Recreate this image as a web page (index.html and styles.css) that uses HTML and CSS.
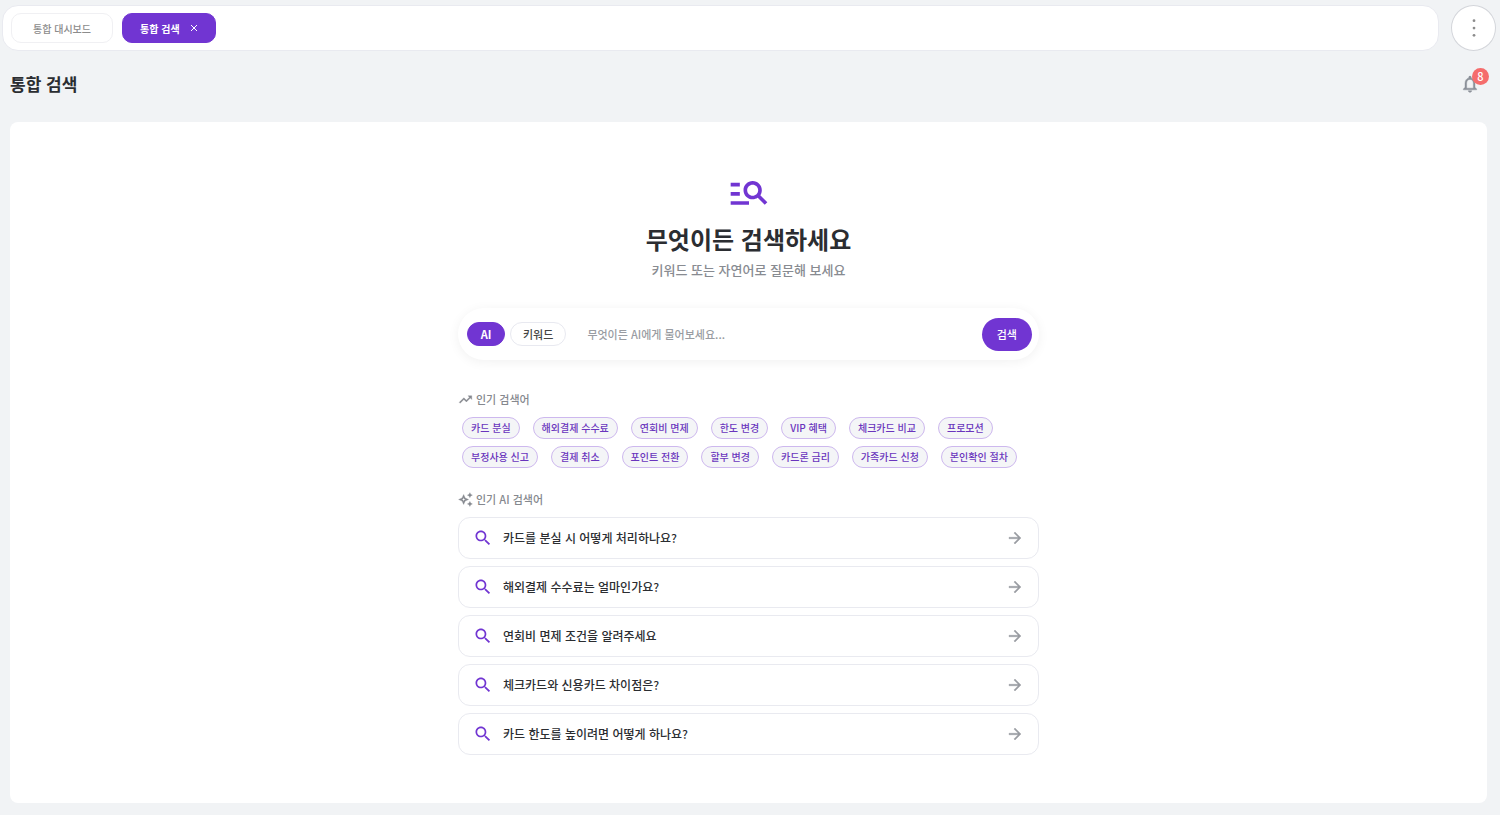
FILE: index.html
```html
<!DOCTYPE html>
<html lang="ko">
<head>
    <meta charset="UTF-8">
    <meta name="viewport" content="width=device-width, initial-scale=1.0">
    <title>통합 검색</title>
    <link rel="stylesheet" href="styles.css">
</head>
<body>
    <!-- Shared icons -->
    <svg class="sprite" aria-hidden="true">
        <symbol id="icon-search" viewBox="0 0 24 24">
            <path d="M15.5 14h-.79l-.28-.27C15.41 12.59 16 11.11 16 9.5 16 5.91 13.09 3 9.5 3S3 5.91 3 9.5 5.91 16 9.5 16c1.61 0 3.09-.59 4.23-1.57l.27.28v.79l5 4.99L20.49 19l-4.99-5zm-6 0C7.01 14 5 11.99 5 9.5S7.01 5 9.5 5 14 7.01 14 9.5 11.99 14 9.5 14z"/>
        </symbol>
        <symbol id="icon-arrow" viewBox="0 0 24 24">
            <path d="M12 4l-1.41 1.41L16.17 11H4v2h12.17l-5.58 5.59L12 20l8-8z"/>
        </symbol>
    </svg>

    <header class="topbar">
        <nav class="tabs">
            <button class="tab" type="button">통합 대시보드</button>
            <button class="tab active" type="button">통합 검색
                <svg class="tab-close" viewBox="0 0 8 8"><path d="M1 1l6 6M7 1L1 7"/></svg>
            </button>
        </nav>
        <button class="more-btn" type="button" aria-label="더보기">
            <svg viewBox="0 0 24 24"><circle cx="12" cy="4" r="1.5"/><circle cx="12" cy="12" r="1.5"/><circle cx="12" cy="20" r="1.5"/></svg>
        </button>
    </header>

    <div class="page-header">
        <h1>통합 검색</h1>
        <button class="bell-btn" type="button" aria-label="알림">
            <svg viewBox="0 0 24 24"><path d="M12 22c1.1 0 2-.9 2-2h-4c0 1.1.9 2 2 2zm6-6v-5c0-3.07-1.63-5.64-4.5-6.32V4c0-.83-.67-1.5-1.5-1.5s-1.5.67-1.5 1.5v.68C7.64 5.36 6 7.92 6 11v5l-2 2v1h16v-1l-2-2zm-2 1H8v-6c0-2.48 1.51-4.5 4-4.5s4 2.02 4 4.5v6z"/></svg>
            <span class="badge">8</span>
        </button>
    </div>

    <main class="panel">
        <div class="search-area">
            <div class="hero">
                <svg class="hero-icon" viewBox="0 0 24 24"><path d="M7 9H2V7h5v2zm0 3H2v2h5v-2zm13.59 7l-3.83-3.83c-.8.52-1.74.83-2.76.83-2.76 0-5-2.24-5-5s2.24-5 5-5 5 2.24 5 5c0 1.02-.31 1.96-.83 2.75L22 17.59 20.59 19zM17 11c0-1.65-1.35-3-3-3s-3 1.35-3 3 1.35 3 3 3 3-1.35 3-3zM2 19h10v-2H2v2z"/></svg>
                <h2>무엇이든 검색하세요</h2>
                <p>키워드 또는 자연어로 질문해 보세요</p>
            </div>

            <form class="search-box">
                <button class="mode active" type="button">AI</button>
                <button class="mode" type="button">키워드</button>
                <input class="search-input" type="text" aria-label="검색어" placeholder="무엇이든 AI에게 물어보세요...">
                <button class="search-btn" type="button">검색</button>
            </form>

            <section class="popular">
                <h3>
                    <svg viewBox="0 0 24 24"><path d="M16 6l2.29 2.29-4.88 4.88-4-4L2 16.59 3.41 18l6-6 4 4 6.3-6.29L22 12V6z"/></svg>
                    인기 검색어
                </h3>
                <div class="chips">
                    <button class="chip" type="button">카드 분실</button>
                    <button class="chip" type="button">해외결제 수수료</button>
                    <button class="chip" type="button">연회비 면제</button>
                    <button class="chip" type="button">한도 변경</button>
                    <button class="chip" type="button">VIP 혜택</button>
                    <button class="chip" type="button">체크카드 비교</button>
                    <button class="chip" type="button">프로모션</button>
                    <button class="chip" type="button">부정사용 신고</button>
                    <button class="chip" type="button">결제 취소</button>
                    <button class="chip" type="button">포인트 전환</button>
                    <button class="chip" type="button">할부 변경</button>
                    <button class="chip" type="button">카드론 금리</button>
                    <button class="chip" type="button">가족카드 신청</button>
                    <button class="chip" type="button">본인확인 절차</button>
                </div>
            </section>

            <section class="questions">
                <h3>
                    <svg viewBox="0 0 24 24"><path d="M19 9l1.25-2.75L23 5l-2.75-1.25L19 1l-1.25 2.75L15 5l2.75 1.25zM19 15l-1.25 2.75L15 19l2.75 1.25L19 23l1.25-2.75L23 19l-2.75-1.25zM11.5 9.5L9 4 6.5 9.5 1 12l5.5 2.5L9 20l2.5-5.5L17 12zm-1.51 3.49L9 15.17l-.99-2.18L5.83 12l2.18-.99L9 8.83l.99 2.18 2.18.99z"/></svg>
                    인기 AI 검색어
                </h3>
                <button class="question" type="button">
                    <svg class="q-icon"><use href="#icon-search"/></svg>
                    <span>카드를 분실 시 어떻게 처리하나요?</span>
                    <svg class="q-arrow"><use href="#icon-arrow"/></svg>
                </button>
                <button class="question" type="button">
                    <svg class="q-icon"><use href="#icon-search"/></svg>
                    <span>해외결제 수수료는 얼마인가요?</span>
                    <svg class="q-arrow"><use href="#icon-arrow"/></svg>
                </button>
                <button class="question" type="button">
                    <svg class="q-icon"><use href="#icon-search"/></svg>
                    <span>연회비 면제 조건을 알려주세요</span>
                    <svg class="q-arrow"><use href="#icon-arrow"/></svg>
                </button>
                <button class="question" type="button">
                    <svg class="q-icon"><use href="#icon-search"/></svg>
                    <span>체크카드와 신용카드 차이점은?</span>
                    <svg class="q-arrow"><use href="#icon-arrow"/></svg>
                </button>
                <button class="question" type="button">
                    <svg class="q-icon"><use href="#icon-search"/></svg>
                    <span>카드 한도를 높이려면 어떻게 하나요?</span>
                    <svg class="q-arrow"><use href="#icon-arrow"/></svg>
                </button>
            </section>
        </div>
    </main>
</body>
</html>
```
FILE: styles.css
```css
* {
    margin: 0;
    padding: 0;
    box-sizing: border-box;
    font-family: 'Noto Sans CJK KR', sans-serif;
}

body {
    display: flex;
    flex-direction: column;
    min-height: 100vh;
    background: #f1f3f5;
    color: #2b2d31;
}

button {
    border: none;
    background: none;
    cursor: pointer;
}

svg {
    display: block;
    flex: none;
    fill: currentColor;
}

.sprite {
    position: absolute;
    width: 0;
    height: 0;
}

/* Top bar */
.topbar {
    display: flex;
    gap: 12px;
    padding: 5px 4px 0 2px;
}

.tabs {
    flex: 1;
    display: flex;
    align-items: center;
    gap: 9px;
    height: 46px;
    padding: 0 8px;
    background: white;
    border: 1px solid #e9eaf0;
    border-radius: 16px;
}

.tab {
    display: flex;
    align-items: center;
    gap: 10px;
    height: 30px;
    padding: 0 21px;
    border: 1px solid #f0f0f3;
    border-radius: 10px;
    color: #8c8c8c;
    font-size: 10px;
    font-weight: 500;
}

.tab.active {
    padding: 0 17px;
    background: #7135d2;
    border-color: #7135d2;
    color: white;
    font-weight: 700;
}

.tab-close {
    width: 8px;
    height: 8px;
    stroke: currentColor;
    stroke-width: 1;
}

.more-btn {
    display: flex;
    align-items: center;
    justify-content: center;
    width: 45px;
    height: 46px;
    background: white;
    border: 1px solid #d3d5da;
    border-radius: 50%;
    color: #8c8c8c;
}

.more-btn svg {
    width: 22px;
    height: 22px;
}

/* Page title */
.page-header {
    display: flex;
    align-items: center;
    justify-content: space-between;
    height: 71px;
    padding: 0 20px 6px 10px;
}

.page-header h1 {
    font-size: 17px;
    font-weight: 700;
}

.bell-btn {
    position: relative;
    color: #8b9098;
}

.bell-btn svg {
    width: 20px;
    height: 20px;
    stroke: currentColor;
    stroke-width: 0.5;
}

.badge {
    position: absolute;
    top: -6px;
    right: -9px;
    width: 17px;
    height: 17px;
    border-radius: 50%;
    background: #f56c6c;
    color: white;
    font-size: 11px;
    font-weight: 500;
    line-height: 17px;
    text-align: center;
}

/* Search panel */
.panel {
    flex: 1;
    margin: 0 13px 12px 10px;
    padding: 48px 20px;
    background: white;
    border-radius: 8px;
}

.search-area {
    max-width: 581px;
    margin: 0 auto;
}

.hero {
    text-align: center;
}

.hero-icon {
    width: 44px;
    height: 44px;
    margin: 0 auto 8px;
    color: #7135d2;
}

.hero h2 {
    font-size: 24px;
    font-weight: 700;
    line-height: 34px;
}

.hero p {
    margin-top: 2px;
    color: #888b91;
    font-size: 13px;
    font-weight: 500;
    line-height: 24px;
}

.search-box {
    display: flex;
    align-items: center;
    gap: 5px;
    height: 52px;
    margin: 26px 0 30px;
    padding: 0 7px 0 9px;
    background: white;
    border-radius: 26px;
    box-shadow: 0 2px 12px rgba(0,0,0,0.06);
}

.mode {
    min-width: 38px;
    height: 24px;
    padding: 0 12px;
    border: 1px solid #e8e9f0;
    border-radius: 12px;
    color: #444;
    font-size: 11px;
    font-weight: 500;
}

.mode.active {
    background: #7135d2;
    border-color: #7135d2;
    color: white;
    font-weight: 700;
}

.search-input {
    flex: 1;
    min-width: 0;
    padding: 0 16px;
    border: none;
    outline: none;
    font-size: 11px;
    font-weight: 500;
}

.search-input::placeholder {
    color: #999ca2;
}

.search-btn {
    height: 33px;
    padding: 0 15px;
    border-radius: 17px;
    background: #7135d2;
    color: white;
    font-size: 11px;
    font-weight: 500;
}

h3 {
    display: flex;
    align-items: center;
    gap: 3px;
    margin-bottom: 9px;
    color: #85888e;
    font-size: 11px;
    font-weight: 500;
    line-height: 18px;
}

h3 svg {
    width: 15px;
    height: 15px;
    stroke: currentColor;
    stroke-width: 0.5;
}

.chips {
    display: flex;
    flex-wrap: wrap;
    gap: 7px 13px;
    margin-bottom: 22px;
    padding-left: 4px;
}

.chip {
    height: 22px;
    padding: 0 8px 2px;
    border: 1px solid #cdb8ee;
    border-radius: 11px;
    background: #f4f5f7;
    color: #6a35bd;
    font-size: 10px;
    font-weight: 500;
}

.questions {
    display: flex;
    flex-direction: column;
    gap: 7px;
}

.questions h3 {
    margin-bottom: 2px;
}

.question {
    display: flex;
    align-items: center;
    gap: 10px;
    height: 42px;
    padding: 0 14px;
    border: 1px solid #e9eaf0;
    border-radius: 12px;
    color: #2b2d31;
    font-size: 12px;
    font-weight: 500;
    text-align: left;
}

.question span {
    flex: 1;
    padding-bottom: 2px;
}

.q-icon {
    width: 20px;
    height: 20px;
    color: #7135d2;
}

.q-arrow {
    width: 18px;
    height: 18px;
    color: #999ca2;
    stroke: currentColor;
    stroke-width: 0.5;
}
```
